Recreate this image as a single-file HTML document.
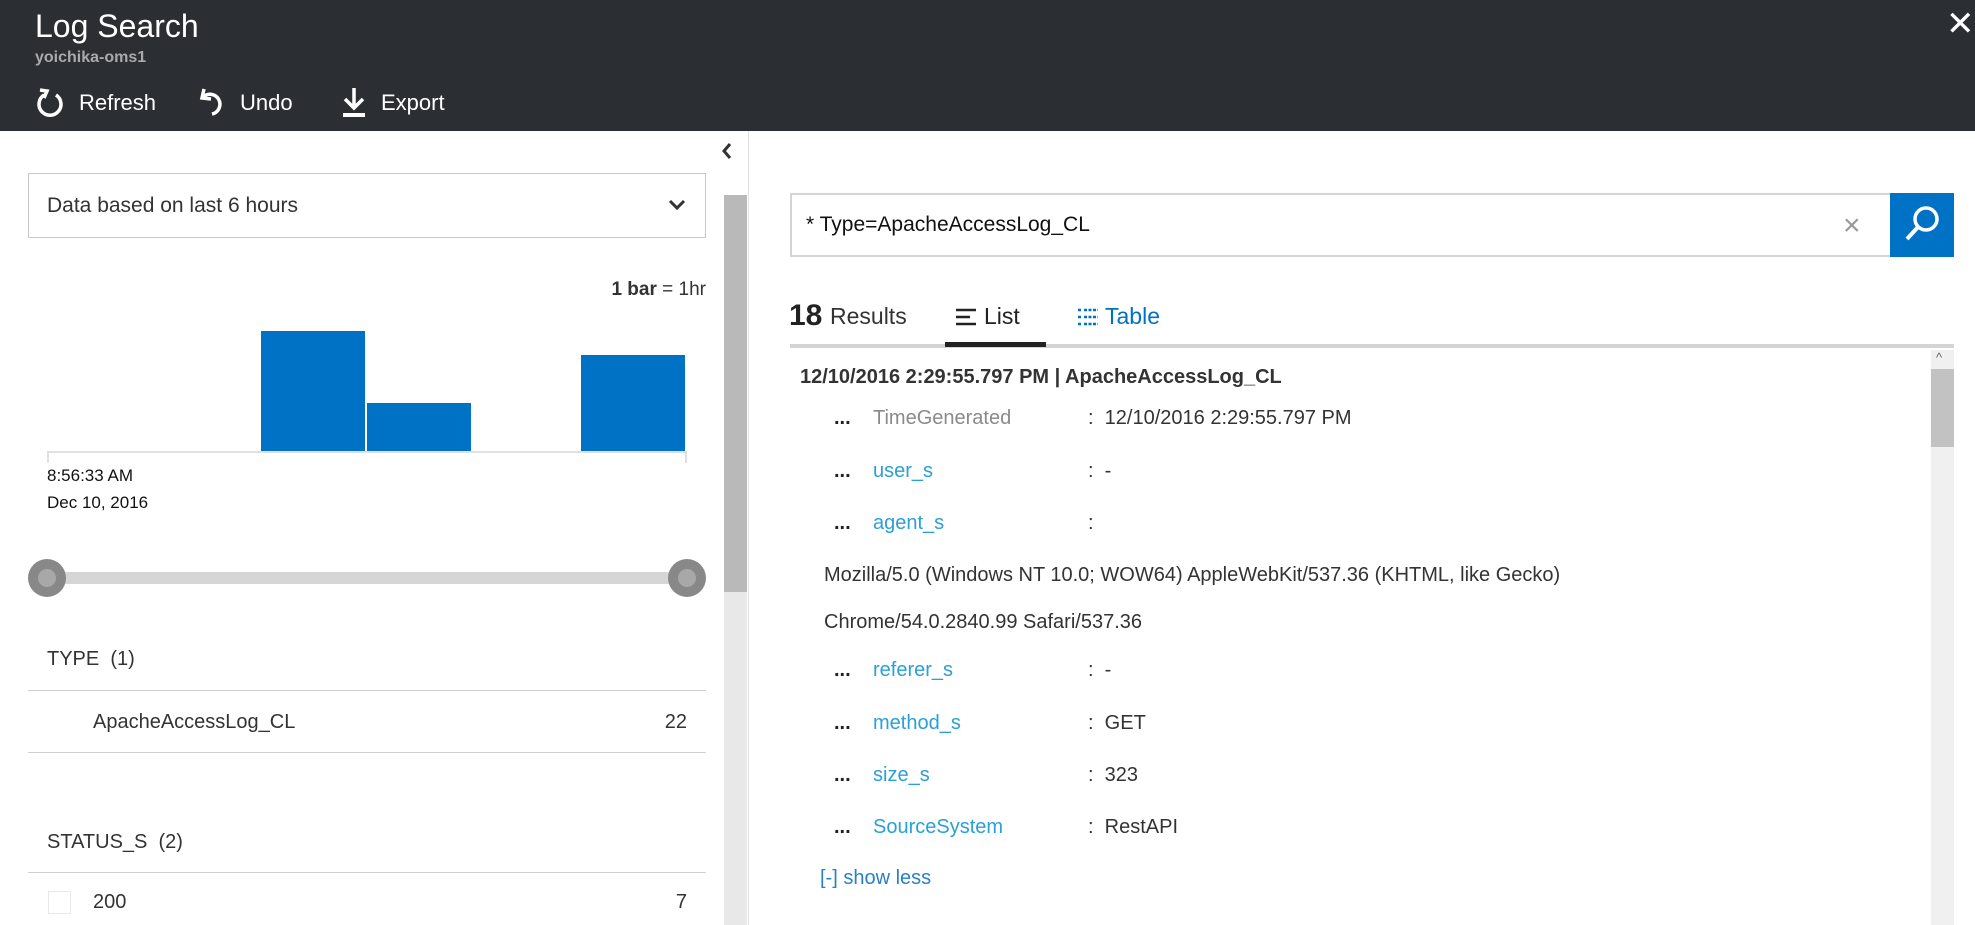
<!DOCTYPE html>
<html><head><meta charset="utf-8"><style>
*{margin:0;padding:0;box-sizing:border-box}
body{width:1975px;height:925px;overflow:hidden;background:#fff;font-family:"Liberation Sans",sans-serif;position:relative;color:#222}
.a{position:absolute;line-height:30px;white-space:nowrap}
.hd{position:absolute;left:0;top:0;width:1975px;height:131px;background:#2b2f33}
.lbl{color:#2a9fd8}
</style></head><body>
<div class="hd"></div>
<div class="a" style="left:35px;top:6px;line-height:40px;font-size:32px;color:#fff">Log Search</div>
<div class="a" style="left:35px;top:43px;font-size:16px;color:#a8aaac;font-weight:bold">yoichika-oms1</div>
<svg style="position:absolute;left:35px;top:87px" width="30" height="32" viewBox="0 0 30 32"><path d="M9 8 A11 11 0 1 0 21 8" fill="none" stroke="#fff" stroke-width="3.5"/><path d="M5 3 L12 4 L9 11" fill="none" stroke="#fff" stroke-width="3.5"/></svg>
<div class="a" style="left:79px;top:88px;font-size:22px;color:#fff">Refresh</div>
<svg style="position:absolute;left:198px;top:86px" width="30" height="32" viewBox="0 0 30 32"><path d="M6 3 L4 12 L13 13" fill="none" stroke="#fff" stroke-width="3.5"/><path d="M5 11 A10 10 0 1 1 14 28" fill="none" stroke="#fff" stroke-width="3.5"/></svg>
<div class="a" style="left:240px;top:88px;font-size:22px;color:#fff">Undo</div>
<svg style="position:absolute;left:340px;top:86px" width="28" height="34" viewBox="0 0 28 34"><path d="M14 2 V21 M5 13 L14 22 L23 13" fill="none" stroke="#fff" stroke-width="3.5"/><rect x="3" y="27" width="22" height="4" fill="#fff"/></svg>
<div class="a" style="left:381px;top:88px;font-size:22px;color:#fff">Export</div>
<div class="a" style="left:1946px;top:4px;font-size:34px;color:#fff;line-height:40px">✕</div>

<div style="position:absolute;left:748px;top:131px;width:1px;height:794px;background:#e0e0e0"></div>
<div style="position:absolute;left:724px;top:195px;width:23px;height:730px;background:#e8e8e8"></div>
<div style="position:absolute;left:724px;top:195px;width:23px;height:397px;background:#b9b9b9"></div>
<svg style="position:absolute;left:720px;top:141px" width="14" height="20" viewBox="0 0 14 20"><path d="M10 3 L4 10 L10 17" fill="none" stroke="#333" stroke-width="3"/></svg>

<div style="position:absolute;left:28px;top:173px;width:678px;height:65px;border:1px solid #c8c8c8"></div>
<div class="a" style="left:47px;top:191px;font-size:21px;color:#333">Data based on last 6 hours</div>
<svg style="position:absolute;left:668px;top:198px" width="18" height="14" viewBox="0 0 18 14"><path d="M2 3 L9 10 L16 3" fill="none" stroke="#333" stroke-width="3"/></svg>
<div class="a" style="right:1269px;top:275px;font-size:19px;color:#333"><b>1 bar</b> = 1hr</div>
<div style="position:absolute;left:47px;top:451px;width:640px;height:2px;background:#e0e0e0"></div>
<div style="position:absolute;left:47px;top:451px;width:2px;height:12px;background:#e0e0e0"></div>
<div style="position:absolute;left:685px;top:451px;width:2px;height:12px;background:#e0e0e0"></div>
<div style="position:absolute;left:261px;top:331px;width:104px;height:120px;background:#0072c6"></div>
<div style="position:absolute;left:367px;top:403px;width:104px;height:48px;background:#0072c6"></div>
<div style="position:absolute;left:581px;top:355px;width:104px;height:96px;background:#0072c6"></div>
<div class="a" style="left:47px;top:461px;font-size:17px;color:#111">8:56:33 AM</div>
<div class="a" style="left:47px;top:488px;font-size:17px;color:#111">Dec 10, 2016</div>
<div style="position:absolute;left:47px;top:572px;width:640px;height:12px;background:#d6d6d6"></div>
<div style="position:absolute;left:28px;top:559px;width:38px;height:38px;border-radius:50%;background:#888"></div>
<div style="position:absolute;left:38px;top:569px;width:18px;height:18px;border-radius:50%;background:#a8a8a8"></div>
<div style="position:absolute;left:668px;top:559px;width:38px;height:38px;border-radius:50%;background:#888"></div>
<div style="position:absolute;left:678px;top:569px;width:18px;height:18px;border-radius:50%;background:#a8a8a8"></div>

<div class="a" style="left:47px;top:644px;font-size:20px;color:#333">TYPE&nbsp; (1)</div>
<div style="position:absolute;left:28px;top:690px;width:678px;height:1px;background:#d0d0d0"></div>
<div class="a" style="left:93px;top:707px;font-size:20px;color:#333">ApacheAccessLog_CL</div>
<div class="a" style="right:1288px;top:707px;font-size:20px;color:#333">22</div>
<div style="position:absolute;left:28px;top:752px;width:678px;height:1px;background:#d0d0d0"></div>
<div class="a" style="left:47px;top:827px;font-size:20px;color:#333">STATUS_S&nbsp; (2)</div>
<div style="position:absolute;left:28px;top:872px;width:678px;height:1px;background:#d0d0d0"></div>
<div style="position:absolute;left:48px;top:891px;width:23px;height:23px;border:1px solid #e8e8e8"></div>
<div class="a" style="left:93px;top:887px;font-size:20px;color:#333">200</div>
<div class="a" style="right:1288px;top:887px;font-size:20px;color:#333">7</div>

<div style="position:absolute;left:790px;top:193px;width:1101px;height:64px;border:2px solid #d4d4d4;border-right:none"></div>
<div class="a" style="left:806px;top:210px;font-size:21px;color:#111">* Type=ApacheAccessLog_CL</div>
<div class="a" style="left:1843px;top:209px;font-size:30px;color:#999;line-height:34px">×</div>
<div style="position:absolute;left:1890px;top:193px;width:64px;height:64px;background:#0072c6"></div>
<svg style="position:absolute;left:1900px;top:202px" width="44" height="44" viewBox="0 0 44 44"><circle cx="26" cy="17" r="11" fill="none" stroke="#fff" stroke-width="3.5"/><path d="M18 25 L7 37" stroke="#fff" stroke-width="4"/></svg>

<div class="a" style="left:789px;top:298px;font-size:30px;color:#222;line-height:36px;font-weight:bold">18</div>
<div class="a" style="left:830px;top:301px;font-size:23px;color:#333">Results</div>
<svg style="position:absolute;left:955px;top:307px" width="22" height="20" viewBox="0 0 22 20"><path d="M1 3H21M1 10H15M1 17H21" stroke="#222" stroke-width="2.5"/></svg>
<div class="a" style="left:984px;top:301px;font-size:23px;color:#222">List</div>
<svg style="position:absolute;left:1077px;top:307px" width="22" height="20" viewBox="0 0 22 20"><path d="M1 3H4M7 3H21M1 10H4M7 10H21M1 17H4M7 17H21" stroke="#0072c6" stroke-width="2.5" stroke-dasharray="3 1.5"/></svg>
<div class="a" style="left:1105px;top:301px;font-size:23px;color:#0072c6">Table</div>
<div style="position:absolute;left:790px;top:344px;width:1164px;height:4px;background:#d4d4d4"></div>
<div style="position:absolute;left:945px;top:342px;width:101px;height:5px;background:#222"></div>

<div style="position:absolute;left:1931px;top:350px;width:23px;height:575px;background:#f0f0f0"></div>
<div style="position:absolute;left:1931px;top:369px;width:23px;height:78px;background:#c2c2c2"></div>
<div class="a" style="left:1936px;top:343px;font-size:13px;color:#666">^</div>

<div class="a" style="left:800px;top:362px;font-size:20px;color:#333;font-weight:bold">12/10/2016 2:29:55.797 PM | ApacheAccessLog_CL</div>

<div class="a" style="left:834px;top:403px;font-size:20px;font-weight:bold">...</div><div class="a" style="left:873px;top:403px;font-size:20px;color:#8a8a8a">TimeGenerated</div><div class="a" style="left:1088px;top:403px;font-size:20px;color:#333">:&nbsp; 12/10/2016 2:29:55.797 PM</div>
<div class="a" style="left:834px;top:456px;font-size:20px;font-weight:bold">...</div><div class="a lbl" style="left:873px;top:456px;font-size:20px">user_s</div><div class="a" style="left:1088px;top:456px;font-size:20px;color:#333">:&nbsp; -</div>
<div class="a" style="left:834px;top:508px;font-size:20px;font-weight:bold">...</div><div class="a lbl" style="left:873px;top:508px;font-size:20px">agent_s</div><div class="a" style="left:1088px;top:508px;font-size:20px;color:#333">:</div>
<div class="a" style="left:824px;top:560px;font-size:20px;color:#333">Mozilla/5.0 (Windows NT 10.0; WOW64) AppleWebKit/537.36 (KHTML, like Gecko)</div>
<div class="a" style="left:824px;top:607px;font-size:20px;color:#333">Chrome/54.0.2840.99 Safari/537.36</div>
<div class="a" style="left:834px;top:655px;font-size:20px;font-weight:bold">...</div><div class="a lbl" style="left:873px;top:655px;font-size:20px">referer_s</div><div class="a" style="left:1088px;top:655px;font-size:20px;color:#333">:&nbsp; -</div>
<div class="a" style="left:834px;top:708px;font-size:20px;font-weight:bold">...</div><div class="a lbl" style="left:873px;top:708px;font-size:20px">method_s</div><div class="a" style="left:1088px;top:708px;font-size:20px;color:#333">:&nbsp; GET</div>
<div class="a" style="left:834px;top:760px;font-size:20px;font-weight:bold">...</div><div class="a lbl" style="left:873px;top:760px;font-size:20px">size_s</div><div class="a" style="left:1088px;top:760px;font-size:20px;color:#333">:&nbsp; 323</div>
<div class="a" style="left:834px;top:812px;font-size:20px;font-weight:bold">...</div><div class="a lbl" style="left:873px;top:812px;font-size:20px">SourceSystem</div><div class="a" style="left:1088px;top:812px;font-size:20px;color:#333">:&nbsp; RestAPI</div>
<div class="a" style="left:820px;top:863px;font-size:20px;color:#2a7fc8">[-] show less</div>
</body></html>
